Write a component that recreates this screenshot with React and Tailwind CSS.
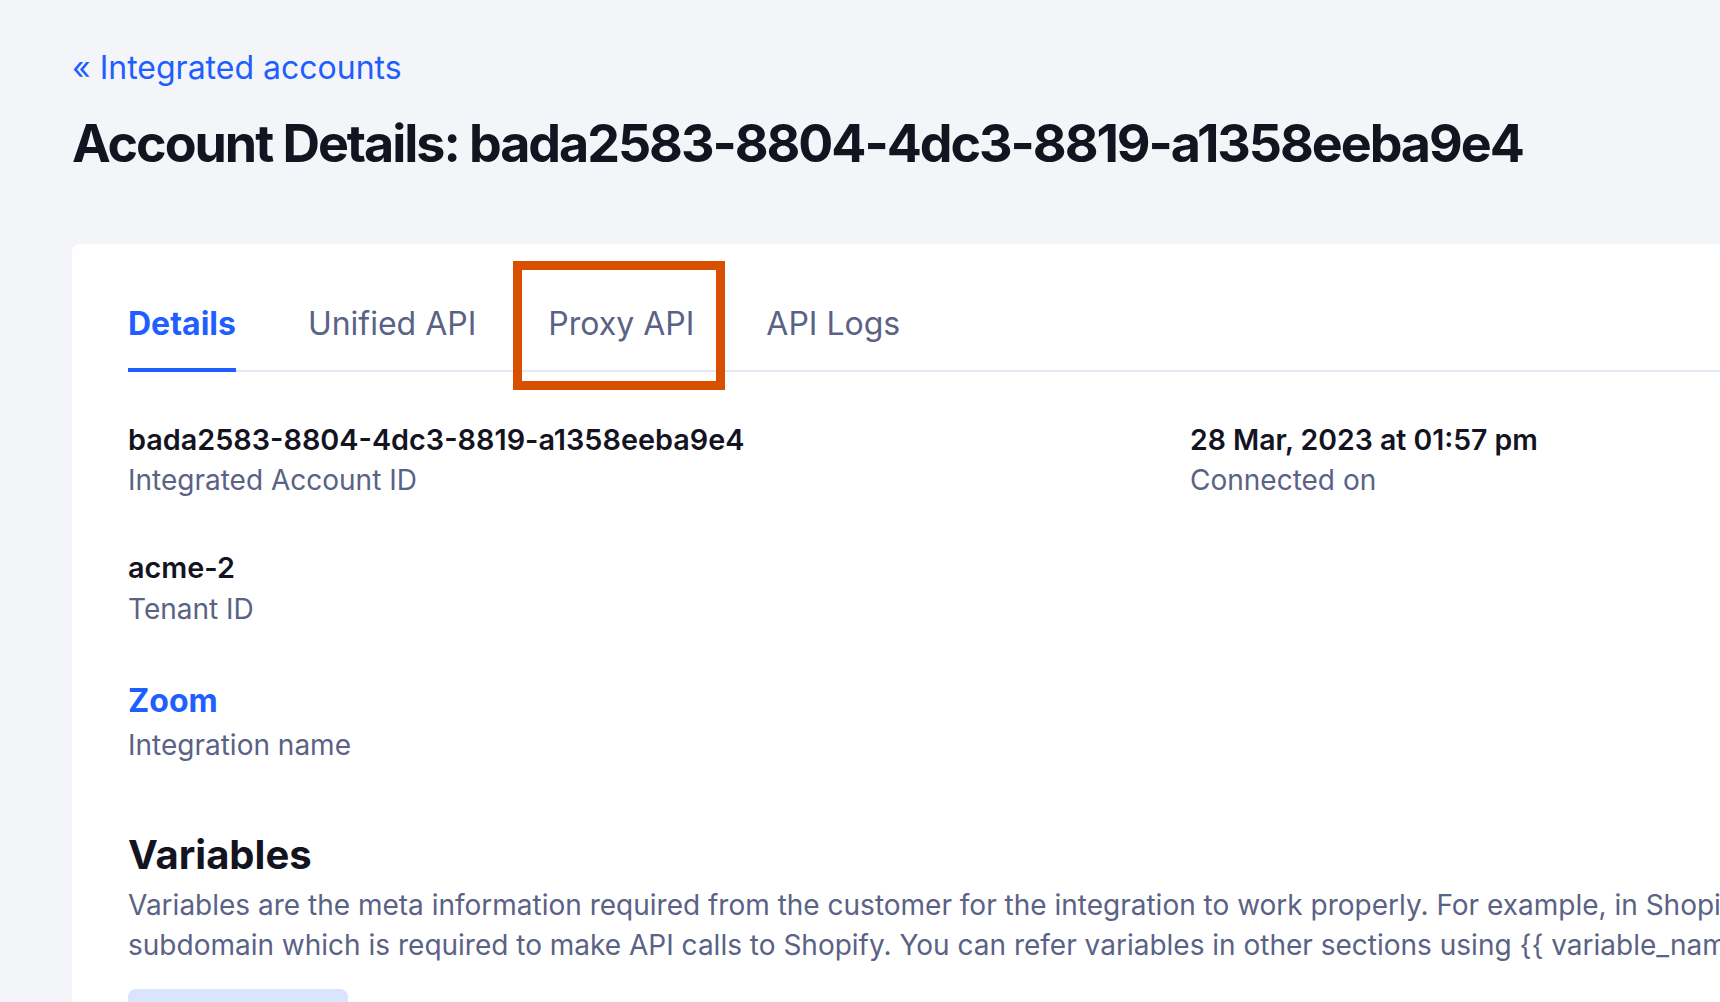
export default function App() {
    const tabs = ["Details", "Unified API", "Proxy API", "API Logs"]

    return (
        <div className="min-h-screen overflow-hidden bg-[#f4f5f9] pl-[72px] pt-[48px] font-['Inter',sans-serif] text-[#13141f]">
            {/* Header */}
            <a className="block text-[32px] leading-[40px] text-[#1f5eff]">« Integrated accounts</a>
            <h1 className="mt-[24px] text-[52px] font-bold leading-[64px] tracking-[-2.05px] whitespace-nowrap">
                Account Details: bada2583-8804-4dc3-8819-a1358eeba9e4
            </h1>

            {/* Card */}
            <div className="mt-[68px] w-[1720px] rounded-lg bg-white pl-[56px] pt-[60px]">
                {/* Tabs */}
                <div className="flex gap-[72px] border-b-2 border-[#e6e8f3]">
                    {tabs.map((t, i) => (
                        <div
                            key={t}
                            className={
                                i === 0
                                    ? "relative -mb-[2px] border-b-4 border-[#1f5eff] pb-[24px] text-[32px] font-bold leading-[40px] text-[#1f5eff]"
                                    : "relative -mb-[2px] border-b-4 border-transparent pb-[24px] text-[32px] leading-[40px] text-[#5a6285]"
                            }
                        >
                            {t}
                            {t === "Proxy API" && (
                                <div className="absolute -left-[35px] -right-[31px] -top-[43px] bottom-[-22px] border-[9px] border-[#d94f00]" />
                            )}
                        </div>
                    ))}
                </div>

                {/* Details */}
                <div className="mt-[48px] flex">
                    <div className="w-[1062px]">
                        <div className="text-[28.8px] font-semibold leading-[40px]">bada2583-8804-4dc3-8819-a1358eeba9e4</div>
                        <div className="text-[28px] leading-[40px] text-[#5a6285]">Integrated Account ID</div>
                    </div>
                    <div>
                        <div className="text-[28.4px] font-semibold leading-[40px]">28 Mar, 2023 at 01:57 pm</div>
                        <div className="text-[28px] leading-[40px] text-[#5a6285]">Connected on</div>
                    </div>
                </div>

                <div className="mt-[48px]">
                    <div className="text-[28.8px] font-semibold leading-[40px]">acme-2</div>
                    <div className="mt-[1px] text-[28px] leading-[40px] text-[#5a6285]">Tenant ID</div>
                </div>

                <div className="mt-[48px]">
                    <div className="text-[32px] font-bold leading-[48px] text-[#1f5eff]">Zoom</div>
                    <div className="text-[28px] leading-[40px] text-[#5a6285]">Integration name</div>
                </div>

                {/* Variables */}
                <div className="mt-[64px]">
                    <h2 className="text-[40px] font-bold leading-[52px]">Variables</h2>
                    <p className="mt-[4px] text-[28px] leading-[40px] text-[#5a6285]">
                        <span className="block whitespace-nowrap">
                            Variables are the meta information required from the customer for the integration to work properly. For example, in Shopify, you need the shop
                        </span>
                        <span className="block whitespace-nowrap">
                            subdomain which is required to make API calls to Shopify. You can refer variables in other sections using {"{{ variable_name }}"}
                        </span>
                    </p>
                    <div className="mt-[24px] h-[60px] w-[220px] rounded-lg bg-[#dae4fd]" />
                </div>
            </div>
        </div>
    )
}
